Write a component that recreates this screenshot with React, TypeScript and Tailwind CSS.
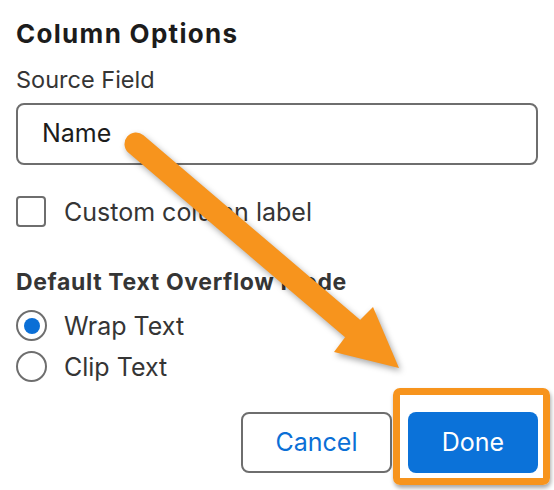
import React, { useState } from 'react';

const Arrow: React.FC = () => (
  <svg
    className="absolute inset-0 pointer-events-none drop-shadow-[2px_3px_3px_rgba(0,0,0,0.35)]"
    width={554}
    height={490}
    viewBox="0 0 554 490"
  >
    <line x1={136} y1={144} x2={352} y2={328} stroke="#f7941d" strokeWidth={23} strokeLinecap="round" />
    <polygon points="399,368 373,307 352,328 334,352" fill="#f7941d" />
  </svg>
);

const App: React.FC = () => {
  const [mode, setMode] = useState<'wrap' | 'clip'>('wrap');
  const [custom, setCustom] = useState(false);

  return (
    <div className="relative w-[554px] h-[490px] bg-white overflow-hidden font-['Inter','Liberation_Sans',sans-serif]">
      <div className="flex flex-col px-4 pt-[19px]">
        <h1 className="text-[26px] leading-[30px] tracking-[1.3px] font-bold text-[#1c1c1c]">Column Options</h1>

        <label className="mt-[17px] text-[23.5px] leading-[28px] text-[#353535]">Source Field</label>
        <div className="mt-[9px] h-[62px] border-2 border-[#6e6e6e] rounded-[8px] flex items-center pl-6">
          <span className="text-[25px] text-[#1c1c1c]">Name</span>
        </div>

        {/* checkbox */}
        <div className="mt-[31px] flex items-center gap-[18px]" onClick={() => setCustom(!custom)}>
          <div className="w-[30px] h-[31px] border-2 border-[#6e6e6e] rounded-[4px] bg-white" />
          <span className="text-[25px] leading-[30px] text-[#353535]">Custom column label</span>
        </div>

        <h2 className="mt-[42px] text-[23px] leading-[26px] tracking-[0.65px] font-bold text-[#353535]">
          Default Text Overflow Mode
        </h2>

        {/* radios */}
        <div className="mt-[15px] flex flex-col gap-[10px]">
          {[
            { key: 'wrap' as const, label: 'Wrap Text' },
            { key: 'clip' as const, label: 'Clip Text' },
          ].map((opt) => (
            <div key={opt.key} className="flex items-center gap-[17px]" onClick={() => setMode(opt.key)}>
              <div className="w-[31px] h-[31px] rounded-full border-2 border-[#6e6e6e] flex items-center justify-center">
                {mode === opt.key && <div className="w-[16px] h-[16px] rounded-full bg-[#0b6fd6]" />}
              </div>
              <span className="text-[25px] leading-[30px] text-[#353535]">{opt.label}</span>
            </div>
          ))}
        </div>

        {/* buttons */}
        <div className="mt-[30px] flex justify-end gap-4">
          <button className="w-[151px] h-[61px] border-2 border-[#6e6e6e] rounded-[8px] bg-white text-[25px] text-[#0b6fd6]">
            Cancel
          </button>
          <div className="relative">
            <button className="w-[130px] h-[61px] rounded-[8px] bg-[#0b72d9] text-[25px] text-white">
              Done
            </button>
            <div className="absolute left-[-15px] top-[-24px] right-[-12px] bottom-[-12px] border-[7px] border-[#f7941d] rounded-[7px] shadow-[1px_3px_4px_rgba(0,0,0,0.35)] pointer-events-none" />
          </div>
        </div>
      </div>

      <Arrow />
    </div>
  );
};

export default App;
